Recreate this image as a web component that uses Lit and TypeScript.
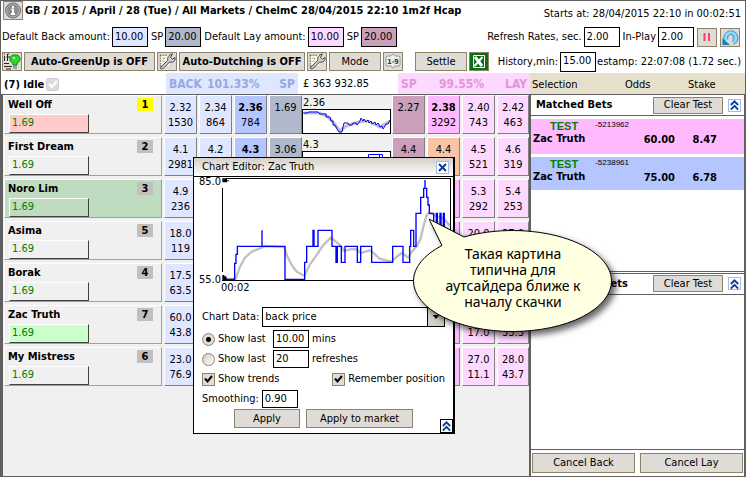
import { LitElement, html, css, svg, nothing } from "lit";
import { customElement } from "lit/decorators.js";
import { classMap } from "lit/directives/class-map.js";

interface Price { p: string; v?: string }
interface Runner {
  name: string;
  no: string;
  tint?: string;
  back: Price[];
  bsp: string;
  last: string;
  lsp: string;
  lay: Price[];
  layTint?: string;
}

const P = (p = "", v = ""): Price => ({ p, v });

const RUNNERS: Runner[] = [
  { name: "Well Off", no: "1", tint: "rose", back: [P("2.32", "1530"), P("2.34", "864"), P("2.36", "784")], bsp: "1.69", last: "2.36", lsp: "2.27", lay: [P("2.38", "3292"), P("2.40", "743"), P("2.42", "463")] },
  { name: "First Dream", no: "2", back: [P("4.1", "2981"), P("4.2"), P("4.3")], bsp: "3.06", last: "4.3", lsp: "4.4", lay: [P("4.4"), P("4.5", "521"), P("4.6", "319")], layTint: "peach" },
  { name: "Noro Lim", no: "3", tint: "chosen", back: [P("4.9", "236"), P(), P()], bsp: "", last: "", lsp: "", lay: [P(), P("5.3", "292"), P("5.4", "253")] },
  { name: "Asima", no: "5", back: [P("18.0", "119"), P(), P()], bsp: "", last: "", lsp: "", lay: [P(), P("20.0"), P("27.0")] },
  { name: "Borak", no: "4", back: [P("17.5", "63.5"), P(), P()], bsp: "", last: "", lsp: "", lay: [P(), P(), P()] },
  { name: "Zac Truth", no: "7", tint: "mint", back: [P("60.0", "43.8"), P(), P()], bsp: "", last: "", lsp: "", lay: [P(), P("", "17.0"), P("", "33.3")] },
  { name: "My Mistress", no: "6", back: [P("23.0", "76.9"), P(), P()], bsp: "", last: "", lsp: "", lay: [P(), P("27.0", "11.1"), P("28.0", "43.7")] },
];

const wrench = svg`
  <path d="M2.500 2.500h10v12h-10z" fill="#fffbe8"/><path d="M2.500 2v13M2 2.500h9M2 14.500h5" fill="none" stroke="#555" stroke-dasharray="2 1"/>
  <path d="M5 6h3M5 9h2" stroke="#9a8a50"/>
  <path d="M3 16l8-8c-1-3 1-6 5-7l-2 4 2 2 3-2c1 4-3 6-6 5l-7 7c-2 1-4 1-3-1z" fill="#d0d0d0" stroke="#333"/>`;

const chevrons = svg`<path d="M2 6l4-4 4 4M2 11l4-4 4 4" fill="none" stroke="#0a3c9c" stroke-width="2"/>`;

@customElement("app-root")
export class AppRoot extends LitElement {
  static styles = css`
    :host {
      display: flex;
      flex-direction: column;
      min-height: 100vh;
      box-sizing: border-box;
      border: 1px solid #606060;
      background: #fff;
      color: #000;
      font: 11px/14px "DejaVu Sans Condensed", Tahoma, "Noto Sans", sans-serif;
      overflow: hidden;
    }
    * { box-sizing: border-box; }
    button, input, select { font: inherit; color: inherit; margin: 0; border-radius: 0; }
    button {
      display: inline-flex;
      align-items: center;
      justify-content: center;
      height: 19px;
      padding: 0;
      border: 1px solid #8c8368;
      background: #dfdbd6;
      white-space: nowrap;
    }
    input[type="text"] {
      width: 36px;
      height: 20px;
      padding: 0 2px 2px;
      border: 1px solid #000;
      background: #fff;
    }
    input.b { background: #dfe6ff; }
    input.d { background: #b0b8cc; }
    input.p { background: #fdd9ff; }
    input.m { background: #c99fb9; }
    .bar { display: flex; align-items: center; white-space: nowrap; }
    .bar label { display: flex; align-items: center; gap: 2px; }
    .push { margin-left: auto; }
    .top { height: 23px; padding: 0 4px 0 2px; gap: 2px; align-items: flex-start; }
    .top h1 { margin: 3px 0 0; font-size: 11px; line-height: 14px; font-weight: bold; }
    .starts { margin: 6px 0 0 auto; }
    .amounts { height: 26px; padding: 0 5px 0 1px; gap: 3px; }
    .tools { height: 23px; padding: 0 4px 0 1px; gap: 2px; }
    .tools button { flex: none; }
    .icon { width: 20px; flex: none; }
    .wide { width: 131px; font-weight: bold; }
    .dutch { width: 126px; }
    .mode { width: 52px; }
    .gap { margin-left: 10px; }
    .stamp { margin-left: -1px; }
    .heads { height: 21px; align-items: stretch; font-weight: bold; font-size: 12px; }
    .idle { flex: 1; display: flex; align-items: center; padding: 2px 0 0 3px; gap: 2px; font-size: 11px; }
    .band { display: grid; grid-template-columns: 38px 1fr auto; align-items: center; width: 132px; padding: 0 3px; color: #97a9dd; background: #dfe6ff; }
    .band.lay { color: #dd98d5; background: #fdd9ff; }
    .money { width: 100px; padding: 4px 0 0 5px; font-weight: normal; font-size: 11px; }
    .cols { display: flex; align-items: center; width: 215px; padding: 3px 0 0 2px; background: #e5dfcb; font-weight: normal; font-size: 11px; }
    .cols span:nth-child(1) { width: 93px; }
    .cols span:nth-child(2) { width: 63px; }

    main { position: relative; display: flex; flex: 1; border-top: 1px solid #606060; }
    .market { flex: 1; min-width: 0; background: #f0f0f0; border-left: 2px solid #606060; padding-left: 1px; }
    table { width: 100%; border-collapse: collapse; table-layout: fixed; }
    td, th { padding: 0 2px 3px 0; text-align: center; vertical-align: top; font-weight: normal; }
    .c35 { width: 35px; }
    .c33 { width: 33px; }
    .c32 { width: 32px; }
    .c90 { width: 90px; }
    td.flush { padding-right: 0; }
    td.graph { padding-right: 1px; text-align: left; }
    .cell { height: 39px; padding-top: 4px; line-height: 15px; border: 1px solid; border-color: #fff #808080 #808080 #fff; }
    .back .cell { background: #dfe6ff; }
    .best .cell { background: #b4c5ff; }
    .bsp .cell { background: #b0b8cc; }
    .lsp .cell { background: #c99fb9; }
    .lay .cell { background: #fdd9ff; }
    .blay .cell { background: #ffb9ff; }
    .peach .cell { background: #f9c3a5; }
    .runner { height: 39px; padding: 2px 8px 0 3px; text-align: left; font-weight: bold; border: 1px solid; border-color: #fff #a0a0a0 #a0a0a0 #fff; }
    .runner.chosen { background: #c0dcc0; }
    .chosen .pl { background: #c0dcc0; }
    .line { display: flex; justify-content: space-between; align-items: flex-start; }
    .no { width: 16px; height: 13px; line-height: 13px; text-align: center; background: #c0c0c0; }
    .no.first { background: #ff0; }
    .pl { width: 80px; height: 19px; margin: 2px 0 0 1px; padding: 1px 2px; color: #008000; font-weight: normal; border: 1px solid; border-color: #fff #404040 #404040 #fff; }
    .rose .pl { background: #ffcaca; }
    .mint .pl { background: #caffca; }
    .graph span { display: block; height: 14px; padding: 1px 0 0 1px; }
    .graph svg { display: block; width: 100%; height: 25px; }

    aside { display: flex; flex-direction: column; width: 216px; border-left: 2px solid #606060; border-right: 1px solid #606060; }
    .panel { flex: 1; border-bottom: 1px solid #606060; }
    .panel + .panel { border-top: 1px solid #606060; margin-top: 1px; }
    .phead { display: flex; align-items: center; height: 21px; padding: 0 3px 0 5px; gap: 5px; border-bottom: 1px solid #606060; }
    .phead h2 { flex: 1; margin: 0; font-size: 11px; }
    .phead button { width: 70px; height: 17px; }
    .phead .chev { width: 13px; height: 13px; border-color: #a9b9e6; background: #fff; }
    .bets { margin-top: 3px; }
    .bets td { height: 36px; padding: 1px 0; text-align: right; vertical-align: top; font-weight: bold; line-height: 13px; border-bottom: 3px solid #fff; }
    .bets tr { background: #ffb9ff; }
    .bets tr + tr { background: #b4c5ff; }
    .bets td:first-child { width: 64px; padding-left: 2px; text-align: left; }
    .bets .test { display: block; padding-left: 17px; color: #008000; font: bold 11px/12px "Liberation Sans", sans-serif; }
    .bets .ref { width: 34px; padding-top: 2px; font: 8px/8px "Liberation Sans", sans-serif; }
    .bets td.num { padding-top: 14px; }
    .bets .odds { width: 46px; }
    .bets .stake { padding-right: 27px; }
    .foot { display: flex; gap: 5px; padding: 3px 1px; }
    .foot button { flex: 1; height: 20px; }

    .dialog { position: absolute; left: 192px; top: 62px; width: 262px; border: 1px solid #000; border-right-width: 2px; background: #fff; }
    .title { display: flex; align-items: center; justify-content: space-between; height: 19px; padding: 0 4px 0 8px; border-bottom: 1px solid #000; background: linear-gradient(#d4d0c8, #fff); }
    .title .close { width: 13px; height: 13px; border-color: #a9b9e6; background: #fff; }
    .plot { display: grid; grid-template-columns: 27px 230px; grid-template-rows: 104px auto; }
    .axis { grid-row: 1 / 3; display: flex; flex-direction: column; justify-content: space-between; align-items: flex-end; height: 112px; margin-top: -2px; }
    .plot svg { margin-top: 1px; width: 230px; height: 103px; }
    .time { grid-column: 2; margin: 0 0 12px; }
    .form { display: flex; flex-direction: column; padding: 0 8px 2px; }
    .row { display: flex; align-items: center; height: 20px; gap: 3px; }
    .row.first { margin-bottom: 2px; }
    .row label { display: flex; align-items: center; gap: 3px; }
    .row select { flex: 1; height: 20px; padding: 0 2px; border: 1px solid #000; background: #fff; appearance: none; }
    .pick { position: relative; display: flex; flex: 1; }
    .arrow { position: absolute; right: 1px; top: 1px; width: 17px; height: 18px; background: #d4d0c8; border-left: 1px solid #000; pointer-events: none; }
    .row input[type="radio"] { appearance: none; width: 13px; height: 13px; border: 1px solid #8c8368; border-radius: 50%; background: linear-gradient(135deg, #d0ccc4, #fff); }
    .row input[type="radio"]:checked { background: radial-gradient(circle, #000 0 2px, #dfdbd6 3px); }
    .row input[type="checkbox"] { appearance: none; width: 13px; height: 13px; border: 1px solid #8c8368; background: #dfdbd6; }
    .tick { position: relative; }
    .tick svg { position: absolute; left: 0; top: 1px; width: 13px; height: 13px; pointer-events: none; }
    .row .unit { width: 52px; }
    .row input[type="text"] { height: 18px; }
    .acts { position: relative; display: flex; justify-content: center; gap: 6px; height: 22px; }
    .acts .apply { width: 66px; }
    .acts .all { width: 107px; }
    .acts .chev { position: absolute; right: -8px; bottom: -2px; width: 13px; height: 14px; border: 1px solid #000; background: #fff; }

    .balloon { position: absolute; left: 410px; top: 120px; width: 212px; height: 128px; }
    .balloon svg { width: 212px; height: 128px; overflow: visible; filter: drop-shadow(4px 4px 3px rgba(0, 0, 0, 0.6)); }
    .balloon p { position: absolute; left: 20px; right: 28px; top: 31px; margin: 0; text-align: center; font: 14px/16px "Noto Sans", sans-serif; }
  `;

  private price(k: string, x: Price, bold = false) {
    return html`<td class=${k}><div class="cell">${bold ? html`<b>${x.p}</b>` : x.p}<br />${x.v}</div></td>`;
  }

  private spark(i: number) {
    if (i > 1) return nothing;
    return html`<svg viewBox="0 0 89 25" aria-hidden="true"><rect width="89" height="25" fill="#fff" />
      ${i === 0
        ? svg`<path d="M2 4H17L25 7 31 13 38 22 44 17 50 15 57 13 66 12 72 15 78 18 88 12" fill="none" stroke="#c0c0c0" stroke-width="3"/>
          <path d="M1 4H5L7 3H16L18 5H24V8H28L29 12H31V16H33L35 20 37 23H40L41 18 42 14H46L47 16H50L51 14H54L55 16 58 12 59 9 61 12 62 10 64 13 66 11 67 14 69 12 70 15 73 13 74 16 76 14 78 18 80 17 81 20 83 17 84 15H86L88 11" fill="none" stroke="#00f"/>`
        : svg`<path d="M66.500 6V3.500H80.500V6M77.500 3V6" fill="none" stroke="#00f"/>`}
      <path d="M88.500 25V.5H.5V24.500H88" fill="none" stroke="#000" shape-rendering="crispEdges" />
    </svg>`;
  }

  private chev() {
    return html`<button class="chev" aria-label="Collapse"><svg width="12" height="12" viewBox="0 0 12 12">${chevrons}</svg></button>`;
  }

  private tick() {
    return html`<svg viewBox="0 0 13 13"><path d="M3 5.500l2.500 3L10 3" fill="none" stroke="#000" stroke-width="2" /></svg>`;
  }

  private dialog() {
    return html`<section class="dialog" role="dialog" aria-label="Chart Editor">
      <div class="title"><span>Chart Editor: Zac Truth</span>
        <button class="close" aria-label="Close"><svg width="9" height="9" viewBox="0 0 9 9"><path d="M1 1l7 7M8 1L1 8" stroke="#0a3c9c" stroke-width="2" /></svg></button>
      </div>
      <div class="plot">
        <div class="axis"><span>85.0</span><span>55.0</span></div>
        <svg viewBox="93 69 690 309" fill="none">
          <path d="M108 373L137 370 150 335 165 308 185 290 210 280 225 273 283 276 290 300 305 330 320 350 343 362 360 328 380 300 400 270 423 248 440 262 453 273 462 288 480 283 498 282 512 294 540 286 555 298 570 312 605 320 620 305 636 294 655 308 665 290 680 275 692 250 700 215 710 180 718 173 735 182 760 190 780 212" stroke="#c0c0c0" stroke-width="7" />
          <path d="M96 98V350M108 70.500H781.500V376.500H96" stroke="#000" stroke-width="3" shape-rendering="crispEdges" />
          <path d="M97 70h14v6h6v3h-6v3H97zM97 360h6v4h6v6h3v7H97z" fill="#000" />
          <path d="M108 373H134V325H138V298H142V274H216V226V274H285V373H344V322H350V274H369V226H372V274H384V226H426V274H438V322H442V274H454V322H465V274H502V322H512V274H545V322H608V274H639V322H659V274H662V226H671V274H678V175H692V127H701V100H705V75V100H710V127H714V150H718V175H731V220H739V175H742V220H750V175H753V220H760V175H763V220H770" stroke="#00f" stroke-width="4" />
        </svg>
        <span class="time">00:02</span>
      </div>
      <div class="form">
        <div class="row first"><label for="data">Chart Data:</label>
          <span class="pick"><select id="data"><option>back price</option></select>
            <svg class="arrow" viewBox="0 0 17 18"><path d="M5 7h7l-3.500 4z" fill="#000" /></svg></span>
        </div>
        <div class="row"><label><input type="radio" name="span" checked /><span class="unit">Show last</span></label>
          <input type="text" aria-label="Minutes" .value=${"10.00"} /><span>mins</span></div>
        <div class="row"><label><input type="radio" name="span" /><span class="unit">Show last</span></label>
          <input type="text" aria-label="Refreshes" .value=${"20"} /><span>refreshes</span></div>
        <div class="row">
          <label class="tick"><input type="checkbox" checked />${this.tick()}Show trends</label>
          <label class="tick push"><input type="checkbox" checked />${this.tick()}Remember position</label>
        </div>
        <div class="row"><label>Smoothing:<input type="text" .value=${"0.90"} /></label></div>
        <div class="acts"><button class="apply">Apply</button><button class="all">Apply to market</button>${this.chev()}</div>
      </div>
    </section>`;
  }

  private panel(title: string, body: unknown) {
    return html`<section class="panel">
      <div class="phead"><h2>${title}</h2><button>Clear Test</button>${this.chev()}</div>${body}
    </section>`;
  }

  private bet(ref: string, odds: string, stake: string) {
    return html`<tr><td><span class="test">TEST</span>Zac Truth</td><td class="ref">${ref}</td>
      <td class="num odds">${odds}</td><td class="num stake">${stake}</td></tr>`;
  }

  render() {
    return html`
      <header class="bar top">
        <button class="icon" aria-label="Info"><svg width="18" height="17" viewBox="0 0 18 17">
          <circle cx="9" cy="8.500" r="7.500" fill="#8e8e8e" stroke="#6c6c6c" /><circle cx="9" cy="8.500" r="6.500" fill="none" stroke="#b4b4b4" />
          <path d="M9 4v2M7.500 7.500H9V12M7 12h4" fill="none" stroke="#fff" stroke-width="2" /></svg></button>
        <h1>GB / 2015 / April / 28 (Tue) / All Markets / ChelmC 28/04/2015 22:10 1m2f Hcap</h1>
        <span class="starts">Starts at: 28/04/2015 22:10 in 00:02:51</span>
      </header>
      <div class="bar amounts">
        <label>Default Back amount:<input type="text" class="b" .value=${"10.00"} /></label>
        <label>SP<input type="text" class="d" .value=${"20.00"} /></label>
        <label>Default Lay amount:<input type="text" class="p" .value=${"10.00"} /></label>
        <label>SP<input type="text" class="m" .value=${"20.00"} /></label>
        <label class="push">Refresh Rates, sec.<input type="text" .value=${"2.00"} /></label>
        <label>In-Play<input type="text" .value=${"2.00"} /></label>
        <button class="icon" aria-label="Pause"><svg width="10" height="10" viewBox="0 0 10 10"><path d="M2.500 1v8M7 1v8" stroke="#ff3c6a" stroke-width="2" /></svg></button>
        <button class="icon" aria-label="Refresh"><svg width="18" height="17" viewBox="0 0 18 18">
          <path d="M5 12A5.500 5.500 0 1 1 12 14.500" fill="none" stroke="#3f9fd8" stroke-width="5" /><path d="M5 12A5.500 5.500 0 1 1 12 14.500" fill="none" stroke="#9ad6f4" stroke-width="3" />
          <path d="M7 10a3 3 0 1 1 4 1" fill="none" stroke="#4aa8dc" />
          <path d="M1 9.500l8 7.500H1z" fill="#1c80c8" /></svg></button>
      </div>
      <div class="bar tools">
        <button class="icon" aria-label="Rules"><svg width="18" height="17" viewBox="0 0 18 17">
          <path d="M1.500 3v5M1 1h1M6 1H4.500V8M3.500 4H7M1 10.500h5M1 13.500h8M3 16h5" fill="none" stroke="#222" />
          <path d="M12 2a4 4 0 0 1 2 8v2h-4v-2a4 4 0 0 1 2-8z" fill="#2fd42f" stroke="#128a12" /><path d="M10 13h4M10 15h4" stroke="#666" /><circle cx="11" cy="5" r="1" fill="#d8ffd8" /></svg></button>
        <button class="wide">Auto-GreenUp is OFF</button>
        <button class="icon" aria-label="GreenUp settings"><svg width="18" height="17" viewBox="0 0 20 19">${wrench}</svg></button>
        <button class="wide dutch">Auto-Dutching is OFF</button>
        <button class="icon" aria-label="Dutching settings"><svg width="18" height="17" viewBox="0 0 20 19">${wrench}</svg></button>
        <button class="mode">Mode</button>
        <button class="icon" aria-label="Layout 1-9"><svg width="18" height="17" viewBox="0 0 18 17">
          <path d="M3 3h4l2-2 2 2h4l1 1v8l-1 1h-4l-2 2-2-2H3l-1-1V4z" fill="#eee" stroke="#999" /><text x="9" y="11" text-anchor="middle" font-size="7" font-weight="bold" fill="#333">1-9</text></svg></button>
        <button class="mode gap">Settle</button>
        <button class="icon" aria-label="Excel"><svg width="18" height="17" viewBox="0 0 18 17">
          <path d="M0 0h18v17H0z" fill="#0a6e14" /><path d="M3.500 2.500h11v12h-11z" fill="none" stroke="#fff" /><path d="M5 4l7 9" stroke="#fff" stroke-width="3" /><path d="M12.500 4l-8 9" stroke="#fff" stroke-width="2" /></svg></button>
        <label class="push">History,min:<input type="text" .value=${"15.00"} /></label>
        <span class="stamp">estamp: 22:07:08 (1.72 sec.)</span>
      </div>
      <div class="bar heads">
        <div class="idle">(7) Idle <svg width="13" height="13" viewBox="0 0 13 13"><rect x=".5" y=".5" width="12" height="12" rx="2" fill="#ddd" stroke="#ccc" /><path d="M3 6l3 3 5-6" fill="none" stroke="#fff" stroke-width="2" /></svg></div>
        <div class="band"><span>BACK</span><span>101.33%</span><span>SP</span></div>
        <div class="money">£ 363 932.85</div>
        <div class="band lay"><span>SP</span><span>99.55%</span><span>LAY</span></div>
        <div class="cols"><span>Selection</span><span>Odds</span><span>Stake</span></div>
      </div>
      <main>
        <div class="market">
          <table aria-label="Market">
            <colgroup><col /><col class="c35" /><col class="c35" /><col class="c35" /><col class="c33" /><col class="c90" /><col class="c35" /><col class="c35" /><col class="c35" /><col class="c32" /></colgroup>
            <tbody>${RUNNERS.map((r, i) => html`<tr>
              <th scope="row"><div class="runner ${r.tint ?? ""}">
                <div class="line"><span>${r.name}</span><span class=${classMap({ no: true, first: i === 0 })}>${r.no}</span></div>
                <div class="pl">1.69</div></div></th>
              ${this.price("back", r.back[0])}${this.price("back", r.back[1])}${this.price("best", r.back[2], true)}
              ${this.price("bsp flush", P(r.bsp))}
              <td class="graph"><span>${r.last}</span>${this.spark(i)}</td>
              ${this.price("lsp", P(r.lsp))}
              ${this.price(r.layTint ?? "blay", r.lay[0], !r.layTint)}${this.price("lay", r.lay[1])}${this.price("lay flush", r.lay[2])}
            </tr>`)}</tbody>
          </table>
        </div>
        <aside>
          ${this.panel("Matched Bets", html`<table class="bets" aria-label="Matched Bets">${this.bet("-5213962", "60.00", "8.47")}${this.bet("-5238961", "75.00", "6.78")}</table>`)}
          ${this.panel("Unmatched Bets", nothing)}
          <div class="foot"><button>Cancel Back</button><button>Cancel Lay</button></div>
        </aside>
        ${this.dialog()}
        <div class="balloon">
          <svg viewBox="411 215 212 128"><path d="M429 219L464 237A99 50.500 0 0 1 611.500 281A99 50.500 0 0 1 512.500 331.500A99 50.500 0 0 1 413.500 281A99 50.500 0 0 1 442 245.500Z" fill="#ffffe1" stroke="#000" /></svg>
          <p>Такая картина<br />типична для<br />аутсайдера ближе к<br />началу скачки</p>
        </div>
      </main>`;
  }
}
